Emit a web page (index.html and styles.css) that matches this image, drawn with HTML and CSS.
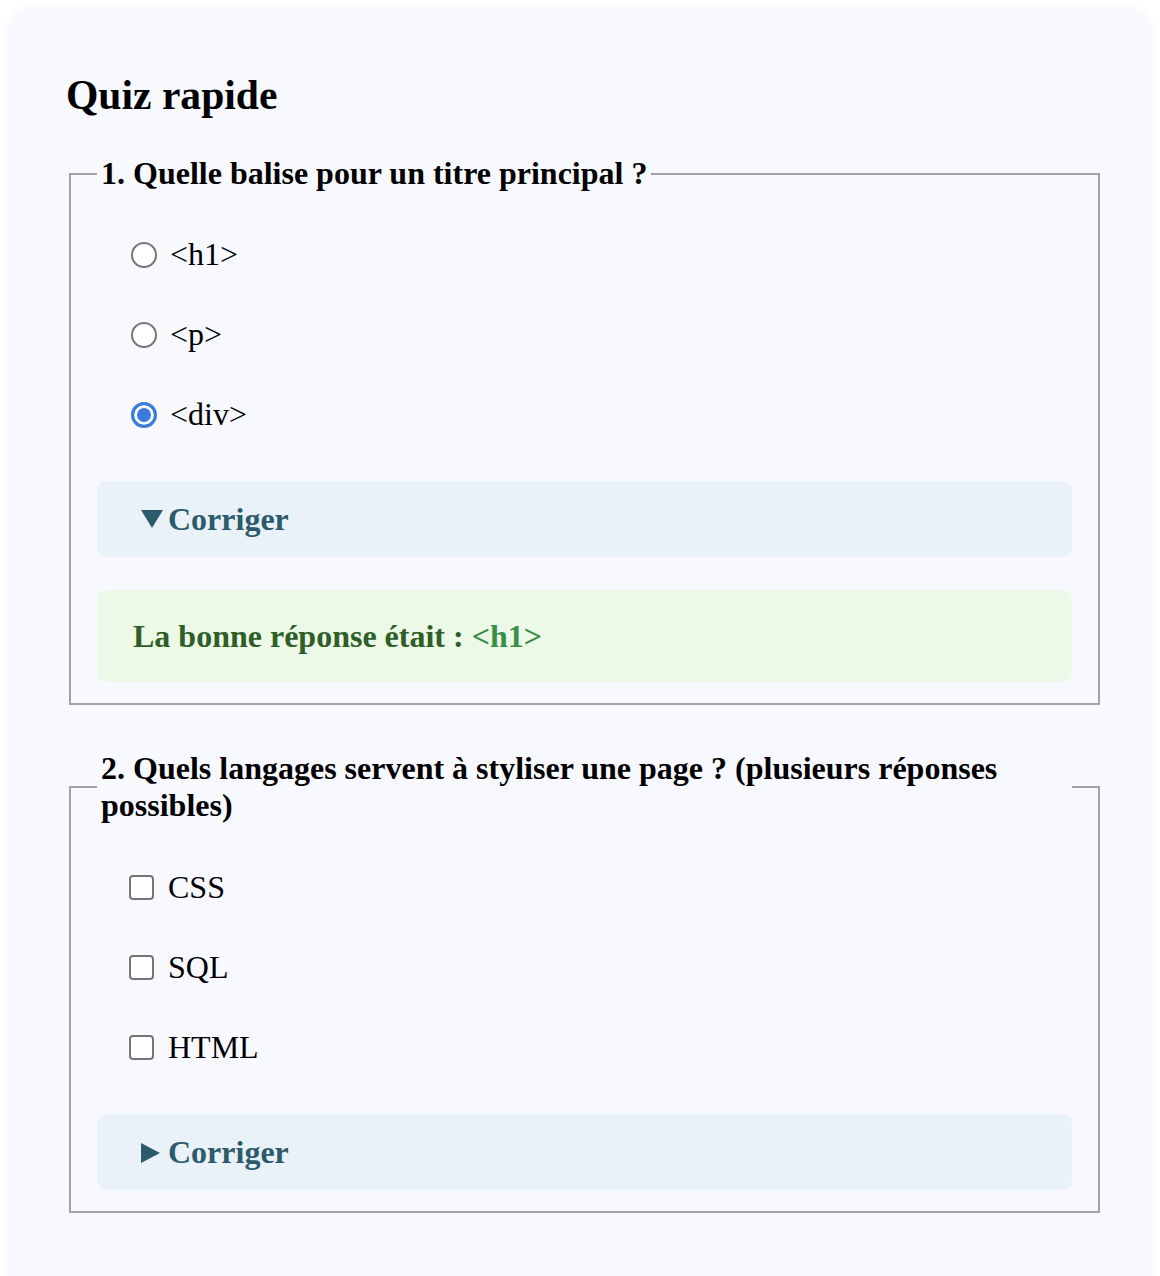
FILE: index.html
```html
<!DOCTYPE html>
<html lang="fr">
<head>
<meta charset="utf-8">
<title>Quiz rapide</title>
<link rel="stylesheet" href="styles.css">
</head>
<body>
<main class="card">
  <h1 class="title">Quiz rapide</h1>

  <fieldset class="question">
    <legend class="question-legend">1. Quelle balise pour un titre principal ?</legend>
    <div class="options">
      <label class="option"><input type="radio" name="q1" class="choice radio"><span>&lt;h1&gt;</span></label>
      <label class="option"><input type="radio" name="q1" class="choice radio"><span>&lt;p&gt;</span></label>
      <label class="option"><input type="radio" name="q1" class="choice radio" checked><span>&lt;div&gt;</span></label>
    </div>
    <details class="correction" open>
      <summary class="correction-summary">Corriger</summary>
      <p class="answer">La bonne réponse était : <span class="answer-code">&lt;h1&gt;</span></p>
    </details>
  </fieldset>

  <fieldset class="question question-second">
    <legend class="question-legend">2. Quels langages servent à styliser une page ? (plusieurs réponses possibles)</legend>
    <div class="options">
      <label class="option option-check"><input type="checkbox" class="choice checkbox"><span>CSS</span></label>
      <label class="option option-check"><input type="checkbox" class="choice checkbox"><span>SQL</span></label>
      <label class="option option-check"><input type="checkbox" class="choice checkbox"><span>HTML</span></label>
    </div>
    <details class="correction">
      <summary class="correction-summary">Corriger</summary>
    </details>
  </fieldset>
</main>
</body>
</html>
```

FILE: styles.css
```css
html, body {
  margin: 0;
  padding: 0;
  background: #ffffff;
}

body {
  padding: 8px 8px 0 8px;
  font-family: "Liberation Serif", "Times New Roman", serif;
  font-size: 32px;
  color: #000000;
}

.card {
  background: #f8f9fe;
  border-radius: 24px;
  box-shadow: 0 0 6px rgba(40, 60, 120, 0.05);
  padding: 48px 49px 90px 58px;
}

.title {
  font-size: 41.6px;
  font-weight: bold;
  margin: 15px 0 36px 0;
  line-height: normal;
}

.question {
  margin: 0 3px;
  padding: 0 26px 21px 26px;
  border: 2px solid #a2a2a2;
  min-width: 0;
}

.question-second {
  margin-top: 45px;
}

.question-legend {
  font-weight: bold;
  padding: 0 4px;
  line-height: normal;
}

.options {
  display: flex;
  flex-direction: column;
  gap: 43px;
  padding-top: 44px;
}

.question-second .options {
  padding-top: 45px;
}

.option {
  display: flex;
  align-items: center;
  gap: 13px;
  padding-left: 34px;
  line-height: normal;
}

.option-check {
  padding-left: 32px;
  gap: 14px;
}

.choice {
  margin: 0;
  flex: none;
  appearance: none;
  -webkit-appearance: none;
  background: #ffffff;
  border: 2px solid #767676;
  box-sizing: border-box;
}

.radio {
  width: 26px;
  height: 26px;
  border-radius: 50%;
}

.radio:checked {
  border: 3px solid #3a7bdc;
  background: #3a7bdc;
  box-shadow: inset 0 0 0 3px #ffffff;
}

.checkbox {
  width: 25px;
  height: 25px;
  border-radius: 4px;
}

.correction {
  margin-top: 48px;
}

.correction-summary {
  display: block;
  list-style: none;
  background: #e9f2f9;
  border-radius: 9px;
  padding: 20px 44px 19px 44px;
  font-weight: bold;
  color: #2d5b6c;
  line-height: normal;
  cursor: pointer;
}

.correction-summary::-webkit-details-marker {
  display: none;
}

.correction-summary::before {
  content: "";
  display: inline-block;
  width: 0;
  height: 0;
  border-top: 10px solid transparent;
  border-bottom: 10px solid transparent;
  border-left: 19px solid #2d5b6c;
  margin-right: 8px;
  vertical-align: baseline;
}

.correction[open] > .correction-summary::before {
  border-left: 11px solid transparent;
  border-right: 11px solid transparent;
  border-top: 18px solid #2d5b6c;
  border-bottom: 0;
  margin-right: 5px;
  margin-bottom: 2px;
}

.answer {
  margin: 33px 0 0 0;
  background: #ecf9e6;
  border-radius: 10px;
  padding: 28px 36px 27px 36px;
  font-weight: bold;
  color: #2f5e29;
  line-height: normal;
}

.answer-code {
  color: #3a8f47;
}
```
